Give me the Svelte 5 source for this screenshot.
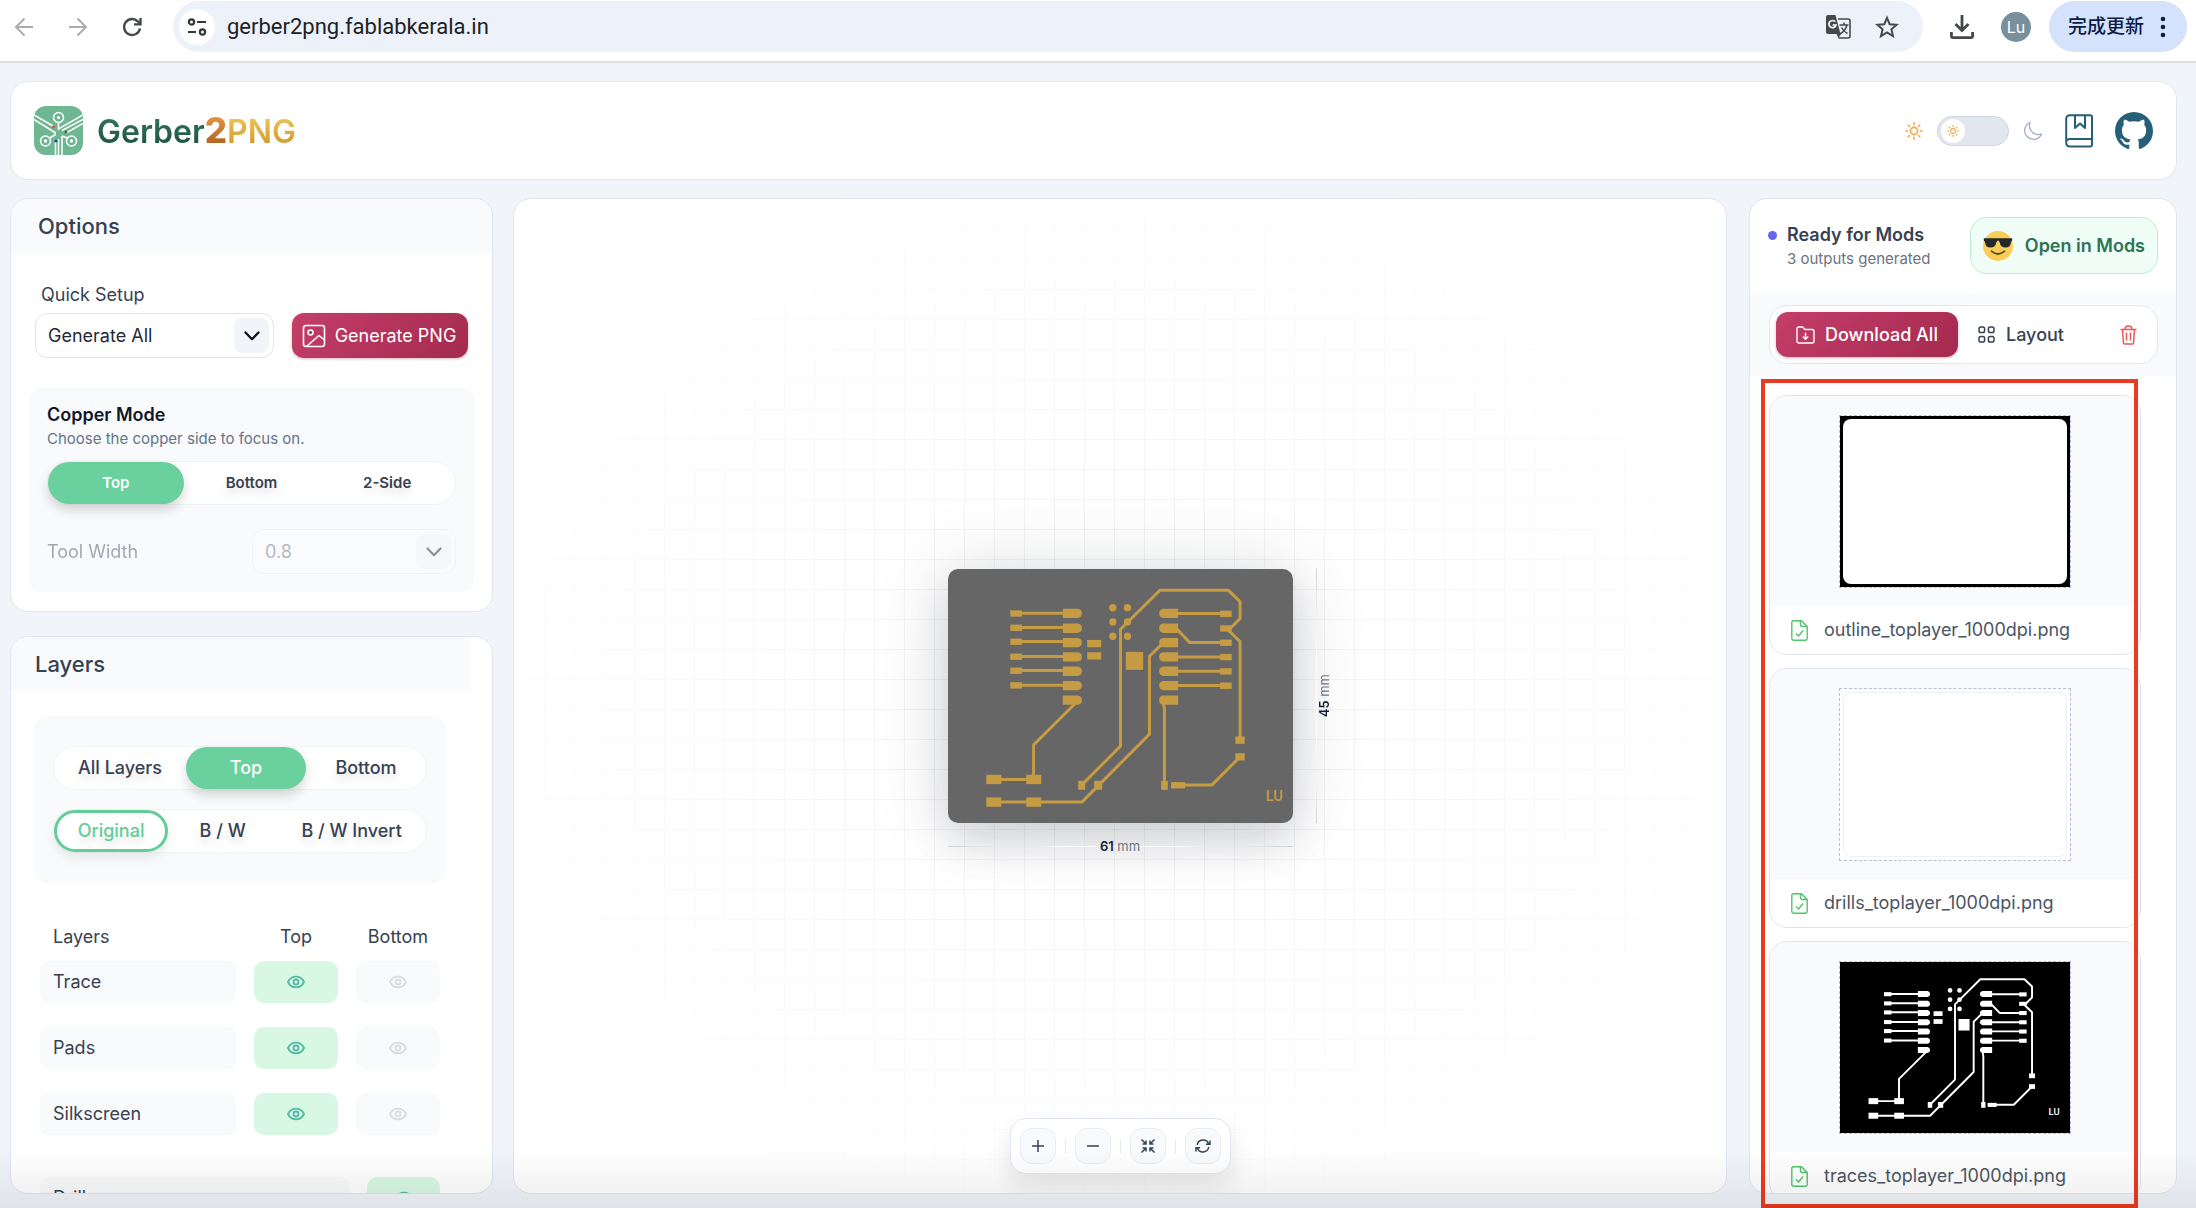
<script>
	const copperModes = ['Top', 'Bottom', '2-Side'];
	const sides = ['All Layers', 'Top', 'Bottom'];
	const tones = ['Original', 'B / W', 'B / W Invert'];
	const layers = ['Trace', 'Pads', 'Silkscreen'];

	const outputs = [
		{ kind: 'outline', name: 'outline_toplayer_1000dpi.png' },
		{ kind: 'drills', name: 'drills_toplayer_1000dpi.png' },
		{ kind: 'traces', name: 'traces_toplayer_1000dpi.png' }
	];

	let copperMode = $state('Top');
	let side = $state('Top');
	let tone = $state('Original');
	let dark = $state(false);

	const padRows = [187, 232, 275, 318, 361, 404, 448];
	const leftPins = [187, 230, 272, 317, 359, 403];
	const rightPins = [188, 232, 275, 318, 361, 404];
	const rays = [0, 45, 90, 135, 180, 225, 270, 315];
</script>

{#snippet copper()}
	<g fill="none" stroke="currentColor" stroke-width="9" stroke-linejoin="round">
		{#each leftPins as y (y)}
			<path d="M256 {y}H420" />
		{/each}
		{#each [188, 318, 361, 404] as y (y)}
			<path d="M715 {y}H885" />
		{/each}
		<path d="M735 232 776 275H885" />
		<path d="M451 703 568 586V235L686 118H892L927 152V203L892 238 927 272V568" />
		<path d="M188 754H452L655 550V316L700 272" />
		<path d="M435 455 307 582V686M188 686H307" />
		<path d="M695 448 700 475V703M740 703H842L927 618" />
	</g>
	<g fill="currentColor">
		{#each leftPins as y (y)}
			<rect x="237" y={y - 9} width="35" height="19" />
		{/each}
		{#each rightPins as y (y)}
			<rect x="867" y={y - 9} width="35" height="19" />
		{/each}
		{#each padRows as y (y)}
			<path d="M395 {y - 14}H440Q452 {y - 12} 452 {y}Q452 {y + 12} 440 {y + 14}H395Z" />
			<path d="M741 {y - 14}H696Q684 {y - 12} 684 {y}Q684 {y + 12} 696 {y + 14}H741Z" />
		{/each}
		{#each [170, 213, 256] as y (y)}
			<circle cx="545" cy={y} r="11" />
			<circle cx="589" cy={y} r="11" />
		{/each}
		<rect x="468" y="267" width="42" height="22" />
		<rect x="468" y="304" width="42" height="22" />
		<rect x="584" y="303" width="52" height="54" />
		<rect x="165" y="672" width="45" height="28" />
		<rect x="285" y="672" width="45" height="28" />
		<rect x="165" y="740" width="45" height="28" />
		<rect x="285" y="740" width="45" height="28" />
		<rect x="441" y="690" width="21" height="27" />
		<rect x="489" y="690" width="24" height="27" />
		<rect x="690" y="690" width="20" height="27" />
		<rect x="720" y="694" width="42" height="19" />
		<rect x="913" y="557" width="28" height="22" />
		<rect x="913" y="607" width="28" height="22" />
		<text x="1004" y="751" font-family="Roboto, sans-serif" font-size="44" font-weight="500">LU</text>
	</g>
{/snippet}

{#snippet sun(size)}
	<svg width={size} height={size} viewBox="0 0 18 18" fill="none" stroke="#f4a340" stroke-width="1.6" stroke-linecap="round">
		<circle cx="9" cy="9" r="3.6" />
		{#each rays as angle (angle)}
			<path d="M9 .9V2.6" transform="rotate({angle} 9 9)" />
		{/each}
	</svg>
{/snippet}

{#snippet eye()}
	<svg width="18" height="14" viewBox="0 0 18 14" fill="none" stroke="currentColor" stroke-width="1.8">
		<path d="M1 7C2.8 3.2 5.6 1.6 9 1.6S15.2 3.2 17 7C15.2 10.8 12.4 12.4 9 12.4S2.8 10.8 1 7Z" />
		<circle cx="9" cy="7" r="2.5" />
	</svg>
{/snippet}

{#snippet chevron()}
	<svg width="16" height="10" viewBox="0 0 16 10" fill="none" stroke="currentColor" stroke-width="2.2" stroke-linecap="round" stroke-linejoin="round">
		<path d="M1.5 1.5 8 8.2 14.5 1.5" />
	</svg>
{/snippet}

<div class="window">
	<div class="browser">
		<nav class="browser-nav">
			<button class="nav-btn muted" aria-label="Back">
				<svg width="20" height="20" viewBox="0 0 20 20" fill="none" stroke="currentColor" stroke-width="2"><path d="M19 10H2M10.5 1.5 2 10l8.5 8.5" /></svg>
			</button>
			<button class="nav-btn muted" aria-label="Forward">
				<svg width="20" height="20" viewBox="0 0 20 20" fill="none" stroke="currentColor" stroke-width="2"><path d="M1 10H18M9.5 1.5 18 10l-8.5 8.5" /></svg>
			</button>
			<button class="nav-btn" aria-label="Reload">
				<svg width="20" height="20" viewBox="0 0 20 20" fill="none" stroke="currentColor" stroke-width="2.4"><path d="M18 11.5A8 8 0 1 1 15.8 4.3L18 6.7" /><path d="M18.5 1V7.4H12" /></svg>
			</button>
		</nav>

		<div class="address">
			<button class="site-info" aria-label="Site information">
				<svg width="20" height="18" viewBox="0 0 20 18" fill="none" stroke="#33363b" stroke-width="2.2"><circle cx="4.5" cy="4" r="2.6" /><path d="M10 4H19M1 14H9" /><circle cx="15.5" cy="14" r="2.6" /></svg>
			</button>
			<input class="url" type="text" aria-label="Address" value="gerber2png.fablabkerala.in" />
			<button class="nav-btn" aria-label="Translate">
				<svg width="26" height="26" viewBox="0 0 26 26">
					<path d="M13 5H23Q25 5 25 7V22Q25 24 23 24H13.5" fill="none" stroke="#45484c" stroke-width="1.6" />
					<path d="M14.5 11H23.5M19 8.5V11M22 11Q20.5 17 14.8 20M16.5 13.5Q18.5 17.5 22.5 19.5" fill="none" stroke="#45484c" stroke-width="1.5" />
					<path d="M3 1H10.5L15.5 20H3Q1 20 1 18V3Q1 1 3 1Z" fill="#45484c" />
					<path d="M16 20H11.5L13.5 24Z" fill="#45484c" />
					<path d="M10.3 7.8A3.6 3.6 0 1 0 11 11H7.6" fill="none" stroke="#fff" stroke-width="1.7" />
				</svg>
			</button>
			<button class="nav-btn" aria-label="Bookmark this page">
				<svg width="24" height="24" viewBox="0 0 24 24" fill="none" stroke="currentColor" stroke-width="2"><path d="M12 2.8 14.7 9.2 21.6 9.8 16.4 14.3 18 21.1 12 17.5 6 21.1 7.6 14.3 2.4 9.8 9.3 9.2Z" /></svg>
			</button>
		</div>

		<div class="browser-end">
			<button class="nav-btn" aria-label="Downloads">
				<svg width="26" height="26" viewBox="0 0 26 26" fill="none" stroke="currentColor" stroke-width="2.8"><path d="M13 1V16M6.5 10 13 16.5 19.5 10M2.4 18V22Q2.4 23.6 4 23.6H22Q23.6 23.6 23.6 22V18" /></svg>
			</button>
			<span class="avatar">Lu</span>
			<button class="update">
				完成更新
				<svg width="6" height="24" viewBox="0 0 6 24" fill="currentColor"><circle cx="3" cy="4" r="2.3" /><circle cx="3" cy="12" r="2.3" /><circle cx="3" cy="20" r="2.3" /></svg>
			</button>
		</div>
	</div>

	<div class="page">
		<header class="panel top-bar">
			<div class="brand">
				<svg width="49" height="49" viewBox="0 0 49 49" aria-hidden="true">
					<defs><clipPath id="logo-clip"><rect width="49" height="49" rx="12" /></clipPath></defs>
					<rect width="49" height="49" rx="12" fill="#6fb693" />
					<g clip-path="url(#logo-clip)" fill="none" stroke="#fff" stroke-width="1.5">
						<circle cx="24.5" cy="11.5" r="5" />
						<path d="M24.5 16.5V23L49 9M28 24.5 49 13.5M0 9 19 20M0 13.5 21 26.5V29L15.5 32" />
						<circle cx="11.5" cy="35" r="5" />
						<circle cx="37.5" cy="35" r="5" />
						<path d="M49 17.5 32 27M28 30 33.5 32M21.5 49V36M24.5 49V33M28 49V30" />
					</g>
					<circle cx="24.5" cy="11.5" r="1.5" fill="#fff" />
					<circle cx="11.5" cy="35" r="1.7" fill="#fff" />
					<circle cx="37.5" cy="35" r="1.7" fill="#fff" />
					<circle cx="19.5" cy="21" r="1.5" fill="#e54848" />
					<circle cx="32" cy="26" r="1.5" fill="#4c6a35" />
					<circle cx="22" cy="35" r="1.5" fill="#29477c" />
				</svg>
				<h1><span class="brand-gerber">Gerber</span><span class="brand-two">2</span><span class="brand-png">PNG</span></h1>
			</div>

			<div class="top-actions">
				{@render sun(18)}
				<label class="theme">
					<input type="checkbox" role="switch" aria-label="Dark theme" bind:checked={dark} />
					<span class="knob">{@render sun(12)}</span>
				</label>
				<svg class="moon" width="20" height="20" viewBox="0 0 20 20" fill="none" stroke="#a3aac2" stroke-width="1.3" stroke-linejoin="round"><path d="M7 1.5A8.8 8.8 0 1 0 18.6 13A9 9 0 0 1 7 1.5Z" /></svg>
				<a class="top-link" href="#docs" aria-label="Documentation">
					<svg width="28" height="34" viewBox="0 0 28 34" fill="none" stroke="#285f78" stroke-width="2" stroke-linejoin="round"><path d="M27 25V3Q27 1.2 25.2 1.2H5Q1.2 1.2 1.2 5V28.5Q1.2 32.5 5 32.5H25.2Q27 32.5 27 30.5V25H5Q1.2 25 1.2 28.5M10 1.5V14L15 9.5 20 14V1.5" /></svg>
				</a>
				<a class="top-link" href="#github" aria-label="GitHub">
					<svg width="38" height="38" viewBox="0 0 16 16" fill="#285f78"><path d="M8 0C3.58 0 0 3.58 0 8c0 3.54 2.29 6.53 5.47 7.59.4.07.55-.17.55-.38 0-.19-.01-.82-.01-1.49-2.01.37-2.53-.49-2.69-.94-.09-.23-.48-.94-.82-1.13-.28-.15-.68-.52-.01-.53.63-.01 1.08.58 1.23.82.72 1.21 1.87.87 2.33.66.07-.52.28-.87.51-1.07-1.78-.2-3.64-.89-3.64-3.95 0-.87.31-1.59.82-2.15-.08-.2-.36-1.02.08-2.12 0 0 .67-.21 2.2.82.64-.18 1.32-.27 2-.27s1.36.09 2 .27c1.53-1.04 2.2-.82 2.2-.82.44 1.1.16 1.92.08 2.12.51.56.82 1.27.82 2.15 0 3.07-1.87 3.75-3.65 3.95.29.25.54.73.54 1.48 0 1.07-.01 1.93-.01 2.2 0 .21.15.46.55.38A8.01 8.01 0 0 0 16 8c0-4.42-3.58-8-8-8Z" /></svg>
				</a>
			</div>
		</header>

		<main class="workspace">
			<div class="left-column">
				<section class="panel">
					<h2 class="panel-title options-title">Options</h2>
					<div class="options-body">
						<label class="quick-label" for="quick-setup">Quick Setup</label>
						<div class="quick-row">
							<div class="select-box">
								<select id="quick-setup"><option>Generate All</option></select>
								<span class="chevron">{@render chevron()}</span>
							</div>
							<button class="primary generate">
								<svg width="24" height="24" viewBox="0 0 24 24" fill="none" stroke="currentColor" stroke-width="1.6" stroke-linejoin="round"><rect x="1.5" y="1.5" width="21" height="21" rx="2.5" /><circle cx="8.5" cy="8.5" r="2.5" /><path d="M4.5 22.5 17 11.5 22.5 16" /></svg>
								Generate PNG
							</button>
						</div>

						<div class="copper">
							<h3>Copper Mode</h3>
							<p>Choose the copper side to focus on.</p>
							<div class="segments small" role="group" aria-label="Copper mode">
								{#each copperModes as mode (mode)}
									<button class:active={copperMode === mode} aria-pressed={copperMode === mode} onclick={() => (copperMode = mode)}>{mode}</button>
								{/each}
							</div>
							<div class="tool-row">
								<label for="tool-width">Tool Width</label>
								<div class="select-box">
									<select id="tool-width" disabled><option>0.8</option></select>
									<span class="chevron">{@render chevron()}</span>
								</div>
							</div>
						</div>
					</div>
				</section>

				<section class="panel layers-panel">
					<div class="layers-scroll">
						<h2 class="panel-title">Layers</h2>
						<div class="filters">
							<div class="segments sides" role="group" aria-label="Visible side">
								{#each sides as item (item)}
									<button class:active={side === item} aria-pressed={side === item} onclick={() => (side = item)}>{item}</button>
								{/each}
							</div>
							<div class="segments tones" role="group" aria-label="Colour">
								{#each tones as item (item)}
									<button class:outlined={tone === item} aria-pressed={tone === item} onclick={() => (tone = item)}>{item}</button>
								{/each}
							</div>
						</div>

						<table>
							<thead>
								<tr><th>Layers</th><th>Top</th><th>Bottom</th></tr>
							</thead>
							<tbody>
								{#each layers as layer (layer)}
									<tr>
										<td class="layer-name">{layer}</td>
										<td><button class="toggle on" aria-label="{layer} top">{@render eye()}</button></td>
										<td><button class="toggle" aria-label="{layer} bottom">{@render eye()}</button></td>
									</tr>
								{/each}
							</tbody>
						</table>
						<div class="drill-row">
							<span class="layer-name">Drill</span>
							<button class="toggle on" aria-label="Drill">{@render eye()}</button>
						</div>
					</div>
				</section>
			</div>

			<section class="panel canvas" aria-label="Preview">
				<div class="grid"></div>
				<div class="board-wrap">
					<svg class="board" viewBox="50 54 1036 764" role="img" aria-label="Board preview">
						{@render copper()}
					</svg>
					<div class="dim dim-x"><span><b>61</b> mm</span></div>
					<div class="dim dim-y"><span><b>45</b> mm</span></div>
				</div>

				<div class="zoom-bar">
					<button aria-label="Zoom in">
						<svg width="14" height="14" viewBox="0 0 14 14" fill="none" stroke="currentColor" stroke-width="1.5"><path d="M7 1V13M1 7H13" /></svg>
					</button>
					<i></i>
					<button aria-label="Zoom out">
						<svg width="14" height="14" viewBox="0 0 14 14" fill="none" stroke="currentColor" stroke-width="1.5"><path d="M1 7H13" /></svg>
					</button>
					<i></i>
					<button aria-label="Fit">
						<svg width="14" height="14" viewBox="0 0 14 14" fill="none" stroke="currentColor" stroke-width="1.5"><path d="M.5.5 5 5M5 1.5V5H1.5M13.5.5 9 5M9 1.5V5H12.5M.5 13.5 5 9M1.5 9H5V12.5M13.5 13.5 9 9M12.5 9H9V12.5" /></svg>
					</button>
					<i></i>
					<button aria-label="Reset">
						<svg width="16" height="16" viewBox="0 0 16 16" fill="none" stroke="currentColor" stroke-width="1.5"><path d="M2.2 6.8A6 6 0 0 1 13.6 5.8M13.8 9.2A6 6 0 0 1 2.4 10.2M15 2.5V6.2H11M1 13.5V9.8H5" /></svg>
					</button>
				</div>
			</section>

			<div class="right-column">
				<aside class="panel output-panel">
					<div class="output-head">
						<div class="status">
							<span class="dot"></span>
							<div>
								<h2>Ready for Mods</h2>
								<p>3 outputs generated</p>
							</div>
						</div>
						<button class="open-mods">
							<svg width="30" height="30" viewBox="0 0 30 30" aria-hidden="true">
								<circle cx="15" cy="15" r="15" fill="#f9cd57" />
								<path d="M.8 7.2H29.2V9.5Q28 10.2 27.8 12Q27.2 16.5 22.5 16.5Q17.5 16.5 16.7 11.5Q16 9.6 15 9.6T13.3 11.5Q12.5 16.5 7.5 16.5Q2.8 16.5 2.2 12Q2 10.2.8 9.5Z" fill="#22282d" />
								<path d="M8.5 20.2Q15 25.8 21.5 20.2" fill="none" stroke="#65471b" stroke-width="1.7" stroke-linecap="round" />
							</svg>
							Open in Mods
						</button>
					</div>

					<div class="output-tools">
						<div class="tool-group">
							<button class="primary download">
								<svg width="19" height="18" viewBox="0 0 19 18" fill="none" stroke="currentColor" stroke-width="1.4" stroke-linejoin="round"><path d="M1 3Q1 1 3 1H6.5L9 3.5H16Q18 3.5 18 5.5V15Q18 17 16 17H3Q1 17 1 15ZM9.5 6.8V13M6.8 10.5 9.5 13.2 12.2 10.5" /></svg>
								Download All
							</button>
							<button class="layout">
								<svg width="17" height="17" viewBox="0 0 17 17" fill="none" stroke="currentColor" stroke-width="1.5"><rect x="1" y="1" width="5.6" height="5.6" rx="1.8" /><rect x="10.4" y="1" width="5.6" height="5.6" rx="1.8" /><rect x="1" y="10.4" width="5.6" height="5.6" rx="1.8" /><rect x="10.4" y="10.4" width="5.6" height="5.6" rx="1.8" /></svg>
								Layout
							</button>
							<button class="trash" aria-label="Delete all">
								<svg width="17" height="20" viewBox="0 0 17 20" fill="none" stroke="currentColor" stroke-width="1.5" stroke-linejoin="round"><path d="M.5 4.5H16.5M2.5 4.5 3.5 18Q3.6 19 4.6 19H12.4Q13.4 19 13.5 18L14.5 4.5M5 4.5Q5 1 8.5 1T12 4.5M6.5 7.5V15.5M10.5 7.5V15.5" /></svg>
							</button>
						</div>
					</div>

					<div class="cards">
						{#each outputs as output (output.kind)}
							<article class="card">
								<div class="card-preview">
									{#if output.kind === 'traces'}
										<svg class="thumb traces" viewBox="32 41 1072 790" aria-hidden="true">{@render copper()}</svg>
									{:else if output.kind === 'outline'}
										<div class="thumb outline"><div></div></div>
									{:else}
										<div class="thumb drills"><div></div></div>
									{/if}
								</div>
								<div class="card-name">
									<svg width="17" height="21" viewBox="0 0 17 21" fill="none" stroke="#4fc46a" stroke-width="1.4" stroke-linejoin="round"><path d="M10.5.8H2.5Q.8.8.8 2.5V18.5Q.8 20.2 2.5 20.2H14.5Q16.2 20.2 16.2 18.5V6.5ZM9.5.8V4.5Q9.5 6.5 11.5 6.5H16M5 13.5 7.6 16 12 10.5" /></svg>
									<span>{output.name}</span>
								</div>
							</article>
						{/each}
					</div>
				</aside>
				<div class="marker"></div>
			</div>
		</main>
	</div>
	<div class="fade"></div>
</div>

<style>
	:global(body) {
		margin: 0;
	}

	.window {
		position: relative;
		display: flex;
		flex-direction: column;
		height: 100vh;
		overflow: hidden;
		background: #f1f5f9;
		color: #374151;
		font-family: Inter, 'Noto Sans CJK SC', sans-serif;
		font-size: 18px;
		line-height: 24px;
	}

	.window * {
		box-sizing: border-box;
	}

	h1,
	h2,
	h3,
	p {
		margin: 0;
	}

	button,
	input,
	select {
		font: inherit;
		color: inherit;
	}

	button {
		display: flex;
		align-items: center;
		justify-content: center;
		padding: 0;
		border: none;
		background: none;
		cursor: pointer;
	}

	svg {
		display: block;
		flex: none;
	}

	.browser {
		display: flex;
		align-items: flex-start;
		height: 63px;
		padding: 1px 9px 0 12px;
		border-bottom: 2px solid #dddfe1;
		background: #fff;
	}

	.browser-nav {
		display: flex;
		gap: 30px;
		width: 161px;
		height: 52px;
	}

	.nav-btn {
		min-width: 24px;
		color: #45484c;
	}

	.muted {
		color: #aaacae;
	}

	.address {
		display: flex;
		flex: 1;
		align-items: center;
		gap: 24px;
		height: 51px;
		padding: 0 24px 0 6px;
		border-radius: 26px;
		background: #edf1f9;
	}

	.site-info {
		width: 36px;
		height: 36px;
		border-radius: 50%;
		background: #fff;
	}

	.url {
		flex: 1;
		margin-left: -12px;
		padding: 0;
		border: none;
		background: none;
		color: #202124;
		font-family: Roboto, sans-serif;
		font-size: 22px;
		outline: none;
	}

	.browser-end {
		display: flex;
		align-items: center;
		height: 51px;
		padding-left: 26px;
	}

	.avatar {
		width: 30px;
		height: 30px;
		margin: 0 18px 0 26px;
		border-radius: 50%;
		background: #78909c;
		color: #fff;
		font-size: 16px;
		line-height: 30px;
		text-align: center;
	}

	.update {
		gap: 16px;
		width: 138px;
		height: 51px;
		padding-right: 2px;
		border-radius: 26px;
		background: #d5e2fb;
		color: #0c1b46;
		font-size: 19px;
		font-weight: 500;
	}

	.page {
		display: flex;
		flex: 1;
		flex-direction: column;
		gap: 18px;
		min-height: 0;
		padding: 18px 19px 14px 10px;
	}

	.panel {
		overflow: hidden;
		border: 1px solid #e0e6ed;
		border-radius: 18px;
		background: #fff;
	}

	.top-bar {
		display: flex;
		flex: none;
		align-items: center;
		justify-content: space-between;
		height: 99px;
		padding: 0 23px;
	}

	.brand {
		display: flex;
		align-items: center;
		gap: 14px;
	}

	.brand h1 {
		display: flex;
		align-items: baseline;
		font-size: 32px;
		font-weight: 600;
		line-height: 40px;
	}

	.brand span {
		background-clip: text;
		color: transparent;
	}

	.brand-gerber {
		background-image: linear-gradient(#347a62, #1c4a3b);
	}

	.brand-two {
		background-image: linear-gradient(#eba04c, #aa5a20);
		font-size: 35px;
		font-weight: 800;
	}

	.brand-png {
		background-image: linear-gradient(#f4cb5c, #c98f28);
	}

	.top-actions {
		display: flex;
		align-items: center;
	}

	.theme {
		position: relative;
		display: block;
		height: 30px;
		margin: 0 14px;
	}

	.theme input {
		display: block;
		width: 72px;
		height: 30px;
		margin: 0;
		border: 1px solid #cdd5e1;
		border-radius: 15px;
		background: #e2e7ef;
		appearance: none;
	}

	.knob {
		position: absolute;
		top: 3px;
		left: 4px;
		display: flex;
		align-items: center;
		justify-content: center;
		width: 24px;
		height: 24px;
		border-radius: 50%;
		background: #fff;
		pointer-events: none;
	}

	.theme input:checked + .knob {
		left: 44px;
	}

	.top-link {
		margin-left: 22px;
	}

	.workspace {
		display: grid;
		flex: 1;
		grid-template-columns: 483px 1fr 428px;
		gap: 20px;
		min-height: 0;
	}

	.left-column {
		display: flex;
		flex-direction: column;
		gap: 24px;
		min-height: 0;
	}

	.panel-title {
		padding: 0 24px;
		background: #f8fafc;
		color: #374151;
		font-size: 22px;
		font-weight: 500;
		line-height: 54px;
	}

	.options-title {
		padding: 0 27px;
	}

	.options-body {
		padding: 30px 18px 19px;
	}

	.quick-label {
		display: block;
		padding: 0 12px;
	}

	.quick-row {
		display: flex;
		gap: 18px;
		margin: 6px 6px 30px;
	}

	.select-box {
		position: relative;
		flex: 1;
		height: 45px;
	}

	.select-box select {
		width: 100%;
		height: 100%;
		padding: 0 48px 0 12px;
		border: 1px solid #dfe4ee;
		border-radius: 12px;
		background: #fff;
		color: #1f2937;
		appearance: none;
	}

	.chevron {
		position: absolute;
		top: 5px;
		right: 5px;
		display: flex;
		align-items: center;
		justify-content: center;
		width: 35px;
		height: 35px;
		border-radius: 8px;
		background: #f1f5f9;
		color: #0b0d12;
		pointer-events: none;
	}

	.primary {
		border-radius: 12px;
		background: linear-gradient(135deg, #c43e6a, #a42a4f);
		box-shadow: 0 1px 3px rgba(90, 20, 50, 0.3);
		color: #fff;
	}

	.generate {
		gap: 9px;
		width: 176px;
		height: 45px;
		padding-right: 2px;
	}

	.copper {
		padding: 15px 18px 18px;
		border-radius: 12px;
		background: #f8fafc;
	}

	.copper h3 {
		color: #0f172a;
		font-size: 18px;
		font-weight: 600;
	}

	.copper p {
		margin-bottom: 10px;
		color: #64748b;
		font-size: 15px;
	}

	.segments {
		display: grid;
		grid-template-columns: 1fr 1fr 1fr;
		height: 44px;
		border: 1px solid #f1f4f7;
		border-radius: 22px;
		background: #fff;
		font-weight: 500;
	}

	.segments button {
		height: 42px;
		border-radius: 21px;
		text-shadow: 0 6px 8px rgba(0, 0, 0, 0.12);
		white-space: nowrap;
	}

	.segments.small {
		font-size: 15px;
		font-weight: 600;
	}

	.segments .active {
		background: #6ad09d;
		box-shadow: 0 6px 12px rgba(0, 0, 0, 0.16);
		color: #fff;
		text-shadow: none;
	}

	.segments .outlined {
		border: 3px solid #63cd97;
		box-shadow: 0 6px 12px rgba(0, 0, 0, 0.08);
		color: #63cd97;
	}

	.sides {
		grid-template-columns: 11fr 10fr 10fr;
	}

	.tones {
		grid-template-columns: 23fr 22fr 30fr;
		margin-top: 19px;
	}

	.tool-row {
		display: flex;
		align-items: center;
		justify-content: space-between;
		margin-top: 24px;
		opacity: 0.45;
	}

	.tool-row .select-box {
		flex: none;
		width: 204px;
	}

	.layers-panel {
		flex: 1;
		min-height: 0;
	}

	.layers-scroll {
		margin-right: 23px;
	}

	.filters {
		margin: 25px 24px 42px;
		padding: 30px 18px;
		border-radius: 12px;
		background: #f8fafc;
	}

	table {
		display: block;
		margin: 0 29px;
	}

	thead,
	tbody {
		display: block;
	}

	tr {
		display: grid;
		grid-template-columns: 1fr 84px 84px;
		gap: 18px;
		margin-bottom: 24px;
	}

	thead tr {
		margin-bottom: 12px;
	}

	th {
		padding: 0;
		font-weight: 400;
		text-align: center;
	}

	th:first-child {
		padding-left: 13px;
		text-align: left;
	}

	td {
		padding: 0;
	}

	.layer-name {
		padding: 0 13px;
		border-radius: 8px;
		background: #f8fafc;
		line-height: 42px;
	}

	.toggle {
		width: 100%;
		height: 42px;
		border-radius: 10px;
		background: #f9fafb;
		color: #d9dbde;
	}

	.toggle.on {
		background: #d8f8e4;
		color: #55b8a4;
	}

	.drill-row {
		display: grid;
		grid-template-columns: 1fr 73px;
		gap: 18px;
		margin: 42px 29px 0;
	}

	.canvas {
		position: relative;
		display: flex;
		align-items: center;
		justify-content: center;
		margin-right: 2px;
	}

	.grid {
		position: absolute;
		inset: 0;
		background-image: linear-gradient(90deg, rgba(15, 23, 42, 0.07) 1px, transparent 1px),
			linear-gradient(rgba(15, 23, 42, 0.07) 1px, transparent 1px);
		background-size: 30px 30px;
		mask-image: radial-gradient(ellipse at center, #000 0%, transparent 80%);
	}

	.board-wrap {
		position: relative;
		width: 345px;
	}

	.board {
		width: 100%;
		border-radius: 10px;
		background: #666;
		box-shadow:
			0 18px 42px rgba(15, 23, 42, 0.14),
			0 0 84px rgba(15, 23, 42, 0.12);
		color: #c59b43;
	}

	.dim {
		position: absolute;
		display: flex;
		align-items: center;
		justify-content: center;
		color: #6b7280;
		font-size: 13px;
		line-height: 16px;
	}

	.dim b {
		color: #111c36;
		font-weight: 600;
	}

	.dim-x {
		top: calc(100% + 15px);
		right: 0;
		left: 0;
		background: linear-gradient(90deg, #cbd2d9, transparent 15%, transparent 25%, #fff 35%, #fff 65%, transparent 75%, transparent 85%, #cbd2d9) center / 100% 1px no-repeat;
	}

	.dim-y {
		top: 0;
		bottom: 0;
		left: calc(100% + 23px);
		background: linear-gradient(#cbd2d9, transparent 20%, transparent 25%, #fff 35%, #fff 65%, transparent 75%, transparent 85%, #cbd2d9) left / 1px 100% no-repeat;
		writing-mode: vertical-rl;
	}

	.dim-y span {
		transform: rotate(180deg);
	}

	.zoom-bar {
		position: absolute;
		bottom: 19px;
		display: flex;
		align-items: center;
		gap: 9px;
		padding: 9px;
		border: 1px solid #e3e7f0;
		border-radius: 16px;
		background: #fff;
		box-shadow: 0 12px 24px rgba(15, 23, 42, 0.1);
		color: #334155;
	}

	.zoom-bar button {
		width: 36px;
		height: 36px;
		border: 1px solid #e9edf2;
		border-radius: 12px;
		background: #f8fafc;
	}

	.zoom-bar i {
		width: 1px;
		height: 14px;
		background: #e5e9ef;
	}

	.right-column {
		position: relative;
		min-height: 0;
	}

	.output-panel {
		height: 100%;
	}

	.output-head {
		display: flex;
		align-items: flex-start;
		justify-content: space-between;
		height: 94px;
		padding: 18px 18px 0;
	}

	.status {
		display: flex;
		gap: 10px;
		padding-top: 6px;
	}

	.dot {
		width: 9px;
		height: 9px;
		margin-top: 8px;
		border-radius: 50%;
		background: #6366f1;
	}

	.status h2 {
		color: #374151;
		font-size: 18px;
		font-weight: 600;
	}

	.status p {
		color: #6b7280;
		font-size: 15px;
	}

	.open-mods {
		gap: 12px;
		height: 57px;
		padding: 0 12px;
		border: 1px solid #b9efcf;
		border-radius: 17px;
		background: #f0fdf6;
		color: #2c7355;
		font-weight: 600;
	}

	.output-tools {
		padding: 12px 18px 12px 19px;
		background: #f8fafc;
	}

	.tool-group {
		display: flex;
		align-items: center;
		height: 59px;
		padding: 0 6px;
		border: 1px solid #dfe5fd;
		border-radius: 18px;
		background: #fff;
		font-weight: 500;
	}

	.download {
		gap: 10px;
		width: 182px;
		height: 45px;
	}

	.layout {
		gap: 11px;
		margin-left: 20px;
	}

	.trash {
		margin: 0 14px 0 auto;
		color: #ea5a55;
	}

	.cards {
		display: grid;
		gap: 13px;
		padding: 19px 35px 0 19px;
	}

	.card {
		overflow: hidden;
		border: 1px solid #e0e4ec;
		border-radius: 18px;
	}

	.card-preview {
		display: flex;
		align-items: center;
		justify-content: center;
		height: 210px;
		background: #f8fafc;
	}

	.thumb {
		width: 232px;
		height: 173px;
		border: 1px dashed #b9c1d0;
		background: #fff padding-box;
	}

	.outline {
		padding: 3px;
		background-color: #000;
	}

	.outline div {
		height: 100%;
		border-radius: 8px;
		background: #fff;
	}

	.drills {
		padding: 3px;
	}

	.drills div {
		height: 100%;
		border: 1px solid #eff1f4;
		border-radius: 8px;
	}

	.traces {
		background-color: #000;
		color: #fff;
	}

	.card-name {
		display: flex;
		align-items: center;
		gap: 16px;
		height: 48px;
		padding: 0 21px;
		color: #4b5563;
	}

	.marker {
		position: absolute;
		top: 181px;
		right: 39px;
		bottom: -14px;
		left: 12px;
		border: 4px solid #e93b22;
		pointer-events: none;
	}

	.fade {
		position: absolute;
		right: 0;
		bottom: 0;
		left: 0;
		height: 60px;
		background: linear-gradient(transparent, rgba(0, 0, 0, 0.07));
		pointer-events: none;
	}
</style>
